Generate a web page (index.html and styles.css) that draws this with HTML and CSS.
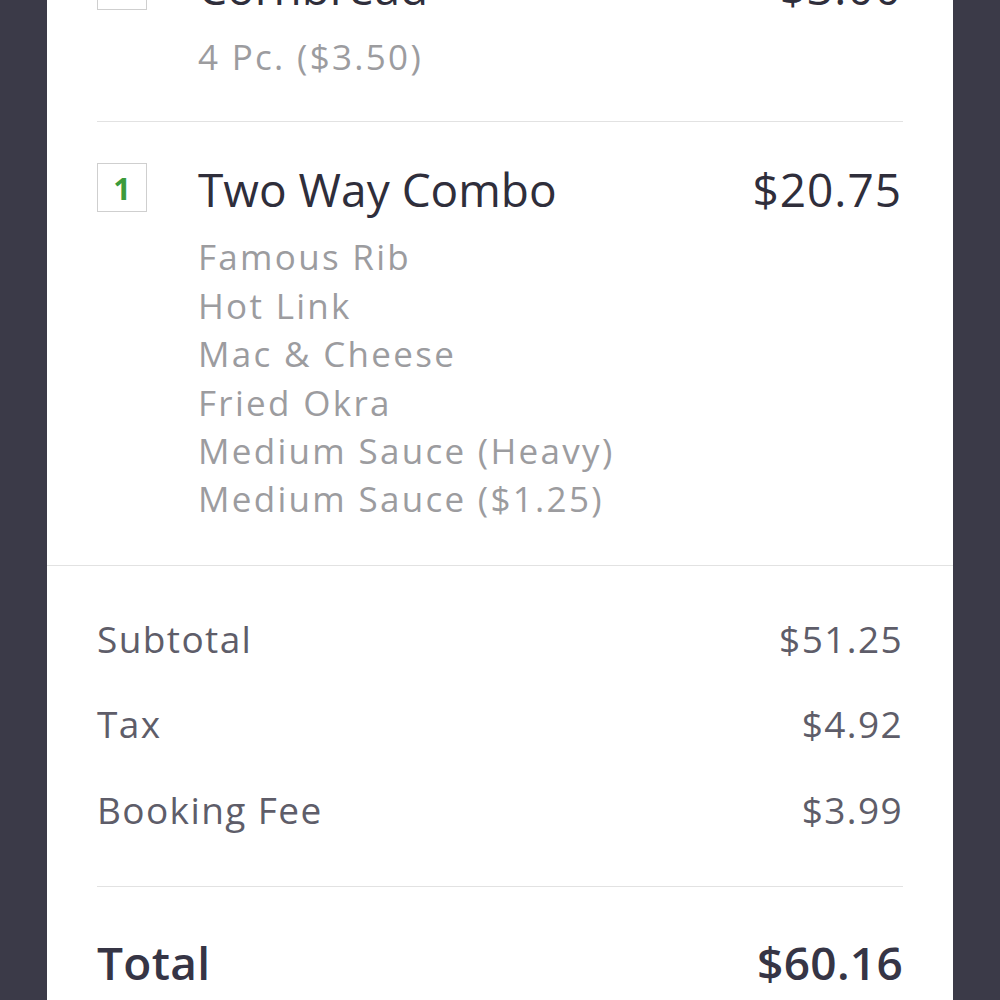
FILE: index.html
```html
<!DOCTYPE html>
<html>
<head>
<meta charset="utf-8">
<link rel="stylesheet" href="styles.css">
</head>
<body>
<div class="card">
  <div class="items">
    <div class="item">
      <div class="qty">1</div>
      <div class="details">
        <div class="name">Cornbread</div>
        <div class="opts">
          <div class="opt">4 Pc. ($3.50)</div>
        </div>
      </div>
      <div class="price">$3.00</div>
    </div>
    <div class="item">
      <div class="qty">1</div>
      <div class="details">
        <div class="name">Two Way Combo</div>
        <div class="opts">
          <div class="opt">Famous Rib</div>
          <div class="opt">Hot Link</div>
          <div class="opt">Mac &amp; Cheese</div>
          <div class="opt">Fried Okra</div>
          <div class="opt">Medium Sauce (Heavy)</div>
          <div class="opt">Medium Sauce ($1.25)</div>
        </div>
      </div>
      <div class="price">$20.75</div>
    </div>
  </div>
  <div class="summary">
    <div class="lines">
      <div class="line"><span>Subtotal</span><span>$51.25</span></div>
      <div class="line"><span>Tax</span><span>$4.92</span></div>
      <div class="line"><span>Booking Fee</span><span>$3.99</span></div>
    </div>
    <div class="total"><span>Total</span><span>$60.16</span></div>
  </div>
</div>
</body>
</html>
```
FILE: styles.css
```css
html, body {
  margin: 0;
  padding: 0;
  background: #3b3a48;
  height: 1000px;
  overflow: hidden;
}
body {
  font-family: "Open Sans", "Noto Sans", sans-serif;
}
.card {
  background: #ffffff;
  margin: -81px 47px 0 47px;
  min-height: 1200px;
}
.items {
  padding: 0 50px;
}
.item {
  display: grid;
  grid-template-columns: 50px 1fr auto;
  column-gap: 51px;
  align-items: start;
  padding: 42px 0 40px 0;
}
.item + .item {
  border-top: 1px solid #e2e2e2;
  padding-top: 41px;
  padding-bottom: 41px;
}
.qty {
  box-sizing: border-box;
  width: 50px;
  height: 49px;
  border: 1px solid #cfcfcf;
  color: #3b9b3b;
  font-size: 31px;
  font-weight: 700;
  display: flex;
  align-items: center;
  justify-content: center;
}
.name {
  font-size: 46px;
  line-height: 52px;
  color: #2f2e3b;
}
.price {
  font-size: 46px;
  line-height: 52px;
  color: #2f2e3b;
  text-align: right;
  letter-spacing: 1px;
  margin-right: 1px;
}
.opts {
  margin-top: 18px;
}
.item:first-child .opts {
  margin-top: 20px;
}
.opt {
  font-size: 35px;
  line-height: 48.4px;
  color: #9c9c9f;
  letter-spacing: 2.3px;
}
.summary {
  border-top: 1px solid #e2e2e2;
  padding: 0 50px;
}
.lines {
  padding: 30px 0 34px 0;
  border-bottom: 1px solid #e2e2e2;
}
.line {
  display: flex;
  justify-content: space-between;
  font-size: 37px;
  line-height: 85.5px;
  color: #5e5d69;
  letter-spacing: 1.4px;
}
.total {
  display: flex;
  justify-content: space-between;
  font-size: 46px;
  line-height: 60px;
  font-weight: 600;
  color: #363545;
  padding: 45px 0 0 0;
  letter-spacing: 0.3px;
}
```
